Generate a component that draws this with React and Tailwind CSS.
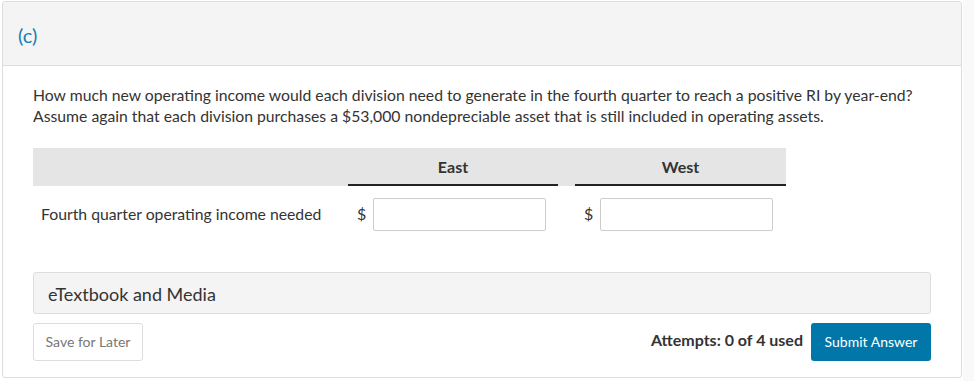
import React from "react";

// ── Ligne de saisie ──────────────────────────
function MoneyInput() {
  return (
    <div className="flex items-center">
      <span className="w-[25px] pl-[9px] text-[16px] text-[#333]">$</span>
      <input
        type="text"
        className="w-[173px] h-[33px] rounded-[2px] border border-[#cccccc] bg-white outline-none"
      />
    </div>
  );
}

export default function App() {
  return (
    <div
      className="flex h-[381px] w-[974px] bg-white"
      style={{ fontFamily: "Lato, 'Liberation Sans', sans-serif" }}
    >
      {/* Carte question */}
      <div className="ml-[2px] mt-[1px] flex h-[377px] w-[960px] flex-col overflow-hidden rounded-[3px] border border-[#dddddd] bg-white">
        {/* En-tête */}
        <div className="flex h-[64px] shrink-0 items-center border-b border-[#dddddd] bg-[#f4f4f4] pl-[15px] pt-[3px]">
          <span className="text-[20px] text-[#1a7bb9]">(c)</span>
        </div>

        <div className="flex flex-1 flex-col px-[30px]">
          {/* Énoncé */}
          <p className="mt-[18px] text-[15.75px] leading-[21px] text-[#333]">
            How much new operating income would each division need to generate in the fourth quarter to reach a positive RI by year-end?
            <br />
            Assume again that each division purchases a $53,000 nondepreciable asset that is still included in operating assets.
          </p>

          {/* Tableau */}
          <div className="mt-[22px] w-[753px]">
            <div className="flex h-[38px] bg-[#e5e5e5]">
              <div className="w-[315px]" />
              <div className="flex w-[210px] items-center justify-center border-b-2 border-[#222] pt-[2px] text-[16px] font-bold text-[#333]">
                East
              </div>
              <div className="w-[17px]" />
              <div className="flex w-[211px] items-center justify-center border-b-2 border-[#222] pt-[2px] text-[16px] font-bold text-[#333]">
                West
              </div>
            </div>
            <div className="flex h-[54px] items-center pt-[2px]">
              <div className="w-[315px] pl-[8px] text-[15.75px] text-[#333]">
                Fourth quarter operating income needed
              </div>
              <MoneyInput />
              <div className="w-[29px]" />
              <MoneyInput />
            </div>
          </div>

          {/* eTextbook */}
          <div className="mt-[32px] flex h-[42px] w-[898px] items-center rounded-[3px] border border-[#dddddd] bg-[#f4f4f4] pl-[14px] pt-[2px]">
            <span className="text-[18px] text-[#333]">eTextbook and Media</span>
          </div>

          {/* Actions */}
          <div className="mt-[9px] flex w-[898px] items-center justify-between">
            <button className="h-[38px] w-[110px] rounded-[3px] border border-[#dddddd] bg-white pb-[2px] text-[14px] text-[#777]">
              Save for Later
            </button>
            <div className="flex items-center gap-[8px]">
              <span className="pb-[4px] text-[16px] font-bold text-[#333]">Attempts: 0 of 4 used</span>
              <button className="h-[38px] w-[120px] rounded-[3px] bg-[#0077a8] pb-[2px] text-[14px] text-white">
                Submit Answer
              </button>
            </div>
          </div>
        </div>
      </div>

      {/* Bande latérale */}
      <div className="ml-[1px] flex-1 bg-[#f9f9f9]" />
    </div>
  );
}
